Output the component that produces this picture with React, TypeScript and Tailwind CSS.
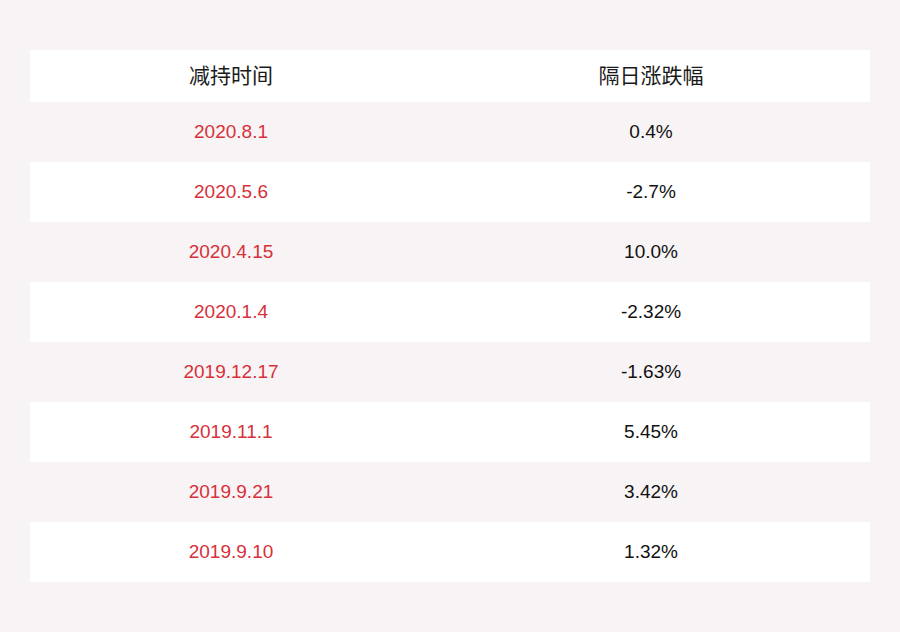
const rows: [string, string][] = [
  ["2020.8.1", "0.4%"],
  ["2020.5.6", "-2.7%"],
  ["2020.4.15", "10.0%"],
  ["2020.1.4", "-2.32%"],
  ["2019.12.17", "-1.63%"],
  ["2019.11.1", "5.45%"],
  ["2019.9.21", "3.42%"],
  ["2019.9.10", "1.32%"],
];

export default function App() {
  return (
    <div className="h-[632px] w-[900px] bg-[#f8f4f5] px-[30px] pt-[50px] font-['Liberation_Sans','Noto_Sans_CJK_SC',sans-serif]">
      <div className="grid h-[52px] grid-cols-[402px_438px] items-center bg-white text-[21px] text-[#1a1a1a]">
        <div className="text-center">减持时间</div>
        <div className="text-center">隔日涨跌幅</div>
      </div>
      {rows.map(([date, change], i) => (
        <div
          key={date}
          className={
            "grid h-[60px] grid-cols-[402px_438px] items-center text-[19px] " +
            (i % 2 === 0 ? "bg-[#f8f4f5]" : "bg-white")
          }
        >
          <div className="text-center text-[#d7303a]">{date}</div>
          <div className="text-center text-[#111]">{change}</div>
        </div>
      ))}
    </div>
  );
}
